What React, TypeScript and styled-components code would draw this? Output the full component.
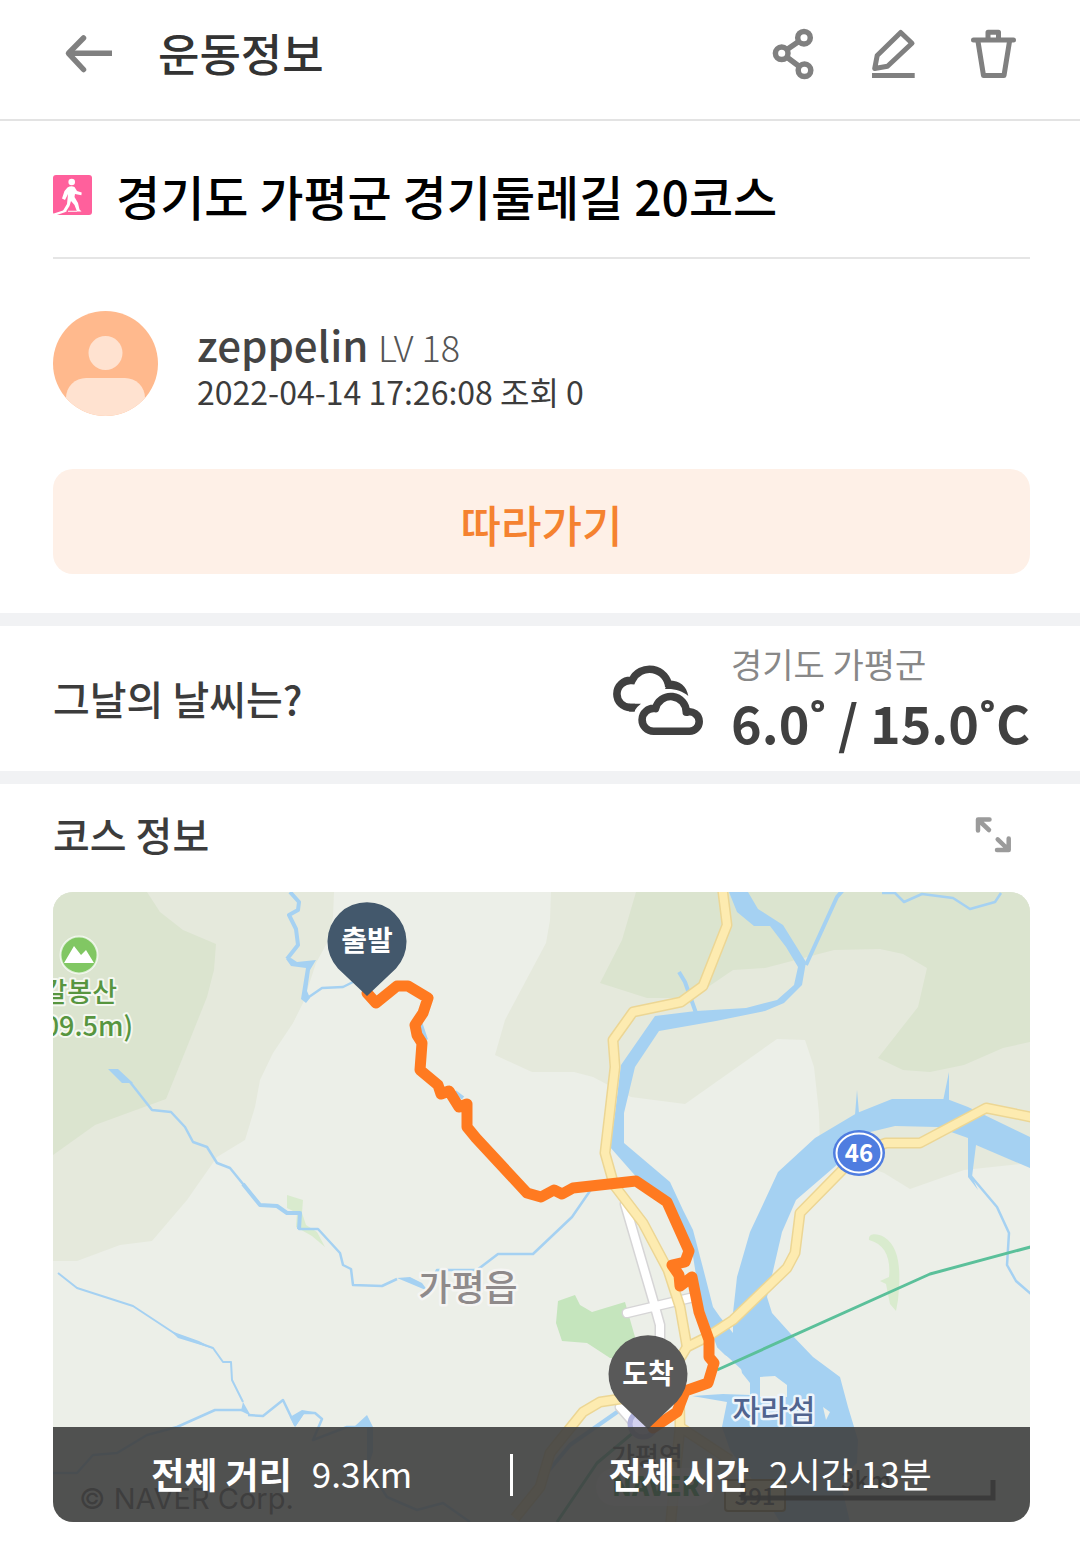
import React from "react";
import styled, { createGlobalStyle } from "styled-components";

const sans = `"Noto Sans CJK KR", "Noto Sans", sans-serif`;

const GlobalStyle = createGlobalStyle`
  *, *::before, *::after { box-sizing: border-box; }
  body { margin: 0; background: #fff; color: #3c3c3c; font-family: ${sans}; }
  h1, h2, p { margin: 0; }
  button { font: inherit; color: inherit; border: 0; padding: 0; background: none; cursor: pointer; }
`;

const Page = styled.main`
  width: 100%;
  padding-bottom: 27px;
`;

const TopBar = styled.header`
  display: flex;
  align-items: center;
  height: 121px;
  padding: 0 59px 14px 61px;
  border-bottom: 2px solid #e3e3e3;
`;

const BarTitle = styled.h1`
  flex: 1;
  margin-left: 41px;
  font-size: 45px;
  line-height: 56px;
  font-weight: 500;
  color: #333;
`;

const Actions = styled.div`
  display: flex;
  gap: 44px;
`;

const IconButton = styled.button`
  display: flex;
  width: 56px;
  height: 56px;
  color: #808080;

  svg { width: 100%; height: 100%; }
`;

const Section = styled.section`
  padding: 0 50px 0 53px;
`;

const CourseTitle = styled.div`
  display: flex;
  align-items: center;
  gap: 23px;
  height: 138px;
  padding-top: 12px;
  border-bottom: 2px solid #e5e5e5;

  svg { width: 40px; height: 40px; flex: none; }

  h2 {
    font-size: 48px;
    line-height: 64px;
    font-weight: 500;
    color: #000;
  }
`;

const Author = styled.div`
  display: flex;
  align-items: center;
  gap: 39px;
  padding: 52px 0 53px;

  > svg { width: 105px; height: 105px; flex: none; }
`;

const AuthorName = styled.p`
  font-size: 42px;
  line-height: 52px;
  font-weight: 500;
  color: #444;

  span {
    font-size: 36px;
    font-weight: 300;
    color: #555;
  }
`;

const AuthorMeta = styled.p`
  font-size: 32px;
  line-height: 38px;
  color: #3c3c3c;
`;

const FollowButton = styled.button`
  display: block;
  width: 100%;
  height: 105px;
  margin-bottom: 39px;
  padding-top: 4px;
  border-radius: 20px;
  background: #fef0e7;
  font-size: 44px;
  font-weight: 500;
  color: #f58230;
`;

const Band = styled.div`
  height: 13px;
  background: #f1f2f4;
`;

const WeatherRow = styled(Section)`
  display: flex;
  align-items: center;
  height: 145px;
  padding-bottom: 2px;
`;

const SectionTitle = styled.h2`
  flex: 1;
  font-size: 40px;
  line-height: 56px;
  font-weight: 500;
  color: #3c3c3c;
`;

const CloudIcon = styled.svg`
  flex: none;
  width: 90px;
  height: 72px;
  margin-right: 28px;
  overflow: visible;
`;

const Place = styled.p`
  font-size: 34px;
  line-height: 48px;
  font-weight: 400;
  color: #888;
`;

const Temperature = styled.p`
  font-size: 52px;
  line-height: 68px;
  font-weight: 700;
  color: #404040;
`;

const CourseHeader = styled(Section)`
  display: flex;
  align-items: center;
  height: 108px;
  padding-right: 59px;
  padding-bottom: 9px;
`;

const MapCard = styled.div`
  position: relative;
  overflow: hidden;
  border-radius: 20px;

  > svg { display: block; width: 100%; height: auto; }
`;

const Summary = styled.dl`
  position: absolute;
  left: 0;
  right: 0;
  bottom: 0;
  display: flex;
  align-items: center;
  height: 95px;
  margin: 0;
  padding-bottom: 4px;
  background: rgba(63, 63, 63, 0.9);
  color: #fff;
  font-size: 36px;
  line-height: 48px;
`;

const Stat = styled.div`
  flex: 1 1 auto;
  display: flex;
  justify-content: center;
  gap: 20px;

  & + & { position: relative; }
  & + &::before {
    content: "";
    position: absolute;
    left: 0;
    top: 5px;
    width: 3px;
    height: 42px;
    background: #fff;
  }

  dt { font-weight: 700; }
  dd { margin: 0; font-size: 35px; font-weight: 400; }
`;

const MapText = styled.text<{ $weight?: number }>`
  font-family: ${sans};
  font-weight: ${(p) => p.$weight ?? 500};
  paint-order: stroke;
  stroke-linejoin: round;
`;

const Copyright = styled.text`
  font-family: Inter, "Liberation Sans", sans-serif;
`;

const ROUTE =
  "M367 993L376 1003L397 986H408L428 998L423 1013L415 1025L417 1035L422 1043L420 1070L438 1085L441 1094L449 1091L459 1107L467 1104V1127L476 1138L527 1193L541 1197L554 1190L562 1194L573 1188L636 1181L667 1202L689 1251L685 1262L672 1265L679 1275L680 1286L692 1277L699 1312L709 1340V1357L714 1363L708 1383L685 1391L677 1412L653 1428";

const ROAD_A =
  "M722 885L727 925L703 986L681 1002L633 1012L613 1040L615 1067L605 1153L614 1185L643 1223L668 1270L680 1307L687 1347";
const ROAD_B =
  "M1036 1118L986 1108L920 1143H886L859 1153L800 1213L795 1253L787 1268L733 1320L707 1337L687 1347L670 1375L640 1396L600 1402L583 1412L550 1453L540 1487L515 1518M679 1380L680 1427L670 1530M680 1427L730 1460";
const WHITE_ROAD = "M625 1204L653 1300L660 1325V1345M627 1313L690 1298M620 1407L640 1430";

function Pin({ x, y, color, label }: { x: number; y: number; color: string; label: string }) {
  return (
    <g transform={`translate(${x} ${y})`}>
      <path d="M0 54L-29 26.500A39.500 39.500 0 1 1 29 26.500Z" fill={color} />
      <MapText $weight={700} y={9} textAnchor="middle" fontSize={28} fill="#fff">
        {label}
      </MapText>
    </g>
  );
}

function CourseMap() {
  return (
    <svg viewBox="53 892 977 630" role="img" aria-label="코스 지도">
      <rect x="53" y="892" width="977" height="630" fill="#ecefe8" />
      <g fill="#e5e9dc">
        <path d="M53 892H334L333 917L327 943L316 963L303 1003L293 1023L273 1053L260 1080L255 1107L245 1140L217 1157L187 1200L152 1241L120 1245L77 1261H53Z" />
        <path d="M551 892L550 920L546 943L505 1020L495 1055L532 1072H574L593 1077L631 1097L685 1104L777 1039L805 1040L814 1067L819 1113L820 1147L842 1157L884 1173L910 1189L964 1170L1030 1163V892Z" />
      </g>
      <g fill="#dbe4cf">
        <path d="M53 892H147L160 912L183 930L216 944L214 970L207 997L187 1047L166 1099L95 1125L53 1155Z" />
        <path d="M636 892L622 940L600 983L647 998H677L708 987L733 970L765 968L834 950L880 949L903 954L927 968L918 1007L878 1058L903 1070L930 1072L964 1065L1003 1048L1030 1042V892Z" />
      </g>
      <path fill="#c5e5bd" d="M558 1301L575 1295L580 1305L592 1312L625 1302L635 1337L630 1358H610L587 1343L562 1341L556 1323Z" />
      <g fill="#d9ebce">
        <path d="M287 1195L303 1200L302 1213L306 1225L317 1232L325 1247L312 1236L296 1227L297 1213L287 1208Z" />
        <path d="M869 1240C868 1233 877 1233 884 1237C900 1247 901 1270 898 1300L896 1311L890 1304L886 1284L880 1281L889 1277C891 1258 885 1244 869 1240Z" />
      </g>

      <g fill="#a5d1f2">
        <path d="M729 892L737 912L754 926H770L786 947L798 967L794 985L777 1000L746 1008L696 1011L655 1016L621 1065L615 1113L610 1147L639 1180L667 1198L692 1250L700 1300L717 1347L742 1370L760 1340L733 1333L720 1317L713 1307L703 1268L693 1230L683 1210L670 1182L624 1143V1113L635 1067L659 1031L716 1021L765 1011L784 1003L802 985L806 962L783 925L758 909L748 892Z" />
        <path d="M1030 1137L968 1107L947 1099H892L857 1113L815 1138L778 1172L765 1200L750 1232L737 1277L733 1313V1333L717 1347L725 1355L740 1363L742 1373L750 1383V1395L723 1394L692 1396L727 1402L722 1427L730 1450L760 1490L780 1522H850L840 1480L857 1463L858 1440L848 1407L840 1377L813 1357L790 1333L772 1313L767 1297L782 1232L796 1200L846 1157L862 1134L895 1126L937 1127L968 1138V1177L978 1190L972 1177L976 1145L1030 1168Z" />
        <path d="M855 1115L857 1090L859 1113ZM943 1101L949 1072V1101ZM108 1069L118 1069L133 1083L122 1083ZM286 959L291 958L297 962L316 960L310 970L307 991L310 998L306 1003L301 999L306 968L291 966Z" />
        <path d="M397 1278L410 1277L422 1283L428 1291L409 1283ZM171 1331L199 1341L214 1349L178 1338ZM290 1417L295 1427L304 1414L314 1412L302 1410ZM355 1426L367 1415L373 1427V1452L367 1470V1427ZM241 1411L243 1402L251 1416Z" />
      </g>
      <path fill="#ecefe8" d="M760 1377L775 1376L787 1385V1397H760ZM823 1407L830 1412L826 1420Z" />
      <g fill="none" stroke="#a5d1f2" strokeWidth="2.500" strokeLinejoin="round">
        <path strokeWidth="4" d="M290 892L299 902L298 910L289 915L296 929L298 945L287 959" />
        <path d="M306 999L322 988L343 987L355 981" />
        <path d="M130 1082L152 1110L171 1112L185 1127L193 1142L207 1147L217 1163L230 1168L260 1205L277 1206L287 1213H300L299 1229H318L340 1253L343 1265L351 1269L353 1285L382 1286L397 1279" />
        <path strokeWidth="4" d="M243 1184L260 1205L277 1206L287 1213H300L299 1229" />
        <path d="M428 1290L437 1270H477L498 1254H533L572 1217L592 1188" />
        <path d="M58 1273L77 1288L133 1306L177 1335L213 1348L223 1362H231L232 1380L243 1402" strokeWidth="2" />
        <path d="M242 1410H215L177 1427L147 1435L117 1453L93 1455L77 1473H53M248 1415L263 1416L283 1400L295 1425L303 1413H315L322 1419L313 1440L347 1427H372M368 1467L387 1497L417 1510L443 1503L470 1522" />
        <path strokeWidth="4" d="M843 890L837 897L806 965M679 972L685 982L696 1013" />
        <path d="M882 893H895L904 902L922 894L953 898L970 909L995 902L1001 893" />
        <path d="M970 1175L997 1207L1009 1233L1007 1265L1016 1281L1031 1294" />
        <path strokeWidth="4" d="M620 1410L570 1445L545 1475M420 1022L426 1040M455 1092L463 1098" />
      </g>

      <g fill="none" strokeLinejoin="round">
        <path d={WHITE_ROAD} stroke="#d6d5d6" strokeWidth="11" strokeLinecap="round" />
        <path d={WHITE_ROAD} stroke="#fff" strokeWidth="8" strokeLinecap="round" />
        <path d={ROAD_A} stroke="#ecd694" strokeWidth="11" />
        <path d={ROAD_B} stroke="#ecd694" strokeWidth="11" />
        <path d={ROAD_A} stroke="#fdebb0" strokeWidth="8" />
        <path d={ROAD_B} stroke="#fdebb0" strokeWidth="8" />
        <path d="M1034 1246L930 1274L717 1370M640 1427L597 1463L557 1522" stroke="#5bc09a" strokeWidth="3" />
      </g>

      <circle cx="643" cy="1424" r="13" fill="#d3d2ef" stroke="#b0b2dc" strokeWidth="5" />
      <path d={ROUTE} fill="none" stroke="#ff7a20" strokeWidth="11" strokeLinecap="round" strokeLinejoin="round" />

      <g>
        <circle cx="79" cy="955" r="18.500" fill="#81c763" stroke="#fff" strokeOpacity=".7" strokeWidth="2" />
        <path d="M64 963L74 946L81 955L86 950L94 963Z" fill="#fff" />
        <MapText x="117" y="1002" textAnchor="end" fontSize="27" fill="#57953f" stroke="#f5f8f1" strokeWidth="4">갈봉산</MapText>
        <MapText x="133" y="1036" textAnchor="end" fontSize="27" fill="#57953f" stroke="#f5f8f1" strokeWidth="4">(909.5m)</MapText>
      </g>
      <MapText x="468" y="1301" textAnchor="middle" fontSize="36" fill="#8f8a8b" stroke="#f5f5f3" strokeWidth="5">가평읍</MapText>
      <MapText x="774" y="1421" textAnchor="middle" fontSize="30" fill="#51648f" stroke="#eef5fb" strokeWidth="5">자라섬</MapText>
      <g>
        <ellipse cx="859" cy="1153" rx="26" ry="23" fill="#4f7de0" />
        <ellipse cx="859" cy="1153" rx="22.500" ry="19.500" fill="none" stroke="#fff" strokeWidth="2" />
        <MapText $weight={700} x="859" y="1162" textAnchor="middle" fontSize="24" fill="#fff">46</MapText>
      </g>

      <MapText x="647" y="1466" textAnchor="middle" fontSize="26" fill="#333">가평역</MapText>
      <rect x="596" y="1468" width="120" height="38" rx="19" fill="#fff" fillOpacity=".7" />
      <MapText $weight={900} x="656" y="1496" textAnchor="middle" fontSize="26" fill="#008c28">NAVER</MapText>
      <rect x="725" y="1480" width="60" height="31" rx="3" fill="#ffe9a3" stroke="#8d7630" strokeWidth="2" />
      <MapText x="755" y="1505" textAnchor="middle" fontSize="24" fill="#222">391</MapText>
      <path d="M743 1483V1498H993V1480" fill="none" stroke="#000" strokeOpacity=".9" strokeWidth="5" />
      <MapText x="866" y="1489" textAnchor="middle" fontSize="24" fill="#000">3km</MapText>
      <Copyright x="79" y="1509" fontSize="29" fill="#333">© NAVER Corp.</Copyright>

      <Pin x={367} y={942} color="#43586c" label="출발" />
      <Pin x={648} y={1375} color="#595959" label="도착" />
    </svg>
  );
}

export default function App() {
  return (
    <Page>
      <GlobalStyle />
      <TopBar>
        <IconButton type="button" aria-label="뒤로">
          <svg viewBox="61 24 56 56" fill="none" stroke="currentColor" strokeWidth="5.500" strokeLinejoin="round">
            <path d="M112 52.300H69" />
            <path d="M83.500 37L68.500 52.300L83.500 68.500" strokeLinecap="round" />
          </svg>
        </IconButton>
        <BarTitle>운동정보</BarTitle>
        <Actions>
          <IconButton type="button" aria-label="공유">
            <svg viewBox="765 24 56 56" fill="none" stroke="currentColor" strokeWidth="5.500">
              <circle cx="804" cy="36.700" r="6.300" />
              <circle cx="781.700" cy="52.300" r="6.300" />
              <circle cx="804.500" cy="69.300" r="6.300" />
              <path d="M787 48.500L798.700 40.500M787 56.200L799 65.200" />
            </svg>
          </IconButton>
          <IconButton type="button" aria-label="수정">
            <svg viewBox="865 24 56 56" fill="none" stroke="currentColor" strokeWidth="5" strokeLinejoin="round">
              <path d="M900.700 31.500L912 42.300L887.500 65.300L874.700 67.500L877.200 54.500Z" />
              <path d="M872 74.500H914.700" />
            </svg>
          </IconButton>
          <IconButton type="button" aria-label="삭제">
            <svg viewBox="965 24 56 56" fill="none" stroke="currentColor" strokeWidth="5" strokeLinejoin="round" strokeLinecap="round">
              <path d="M973.500 39H1013.500M988 38V31.200H998.500V38" />
              <path d="M978 40.500L983.500 74.500H1004L1009.500 40.500" />
            </svg>
          </IconButton>
        </Actions>
      </TopBar>

      <Section>
        <CourseTitle>
          <svg viewBox="0 0 40 40" aria-hidden="true">
            <rect width="39" height="40" rx="3" fill="#ff609c" />
            <circle cx="18.700" cy="7" r="3.300" fill="#fff" />
            <path
              fill="#fff"
              d="M14.500 12.500Q18 10.500 21.500 12L24 16L28.700 17.500L28.400 20.300L22 19L21.500 22L25 28L26.500 34.500L28.500 36.500H24L21.500 30L18 26L16.500 31L13 36.500H9.500L14 29L15 19L12 25L9 23.500L11.500 16Z"
            />
            <path fill="#fff" d="M0 38.700L10 35.500L14 36.500L4 40H0ZM15 35.700H24V36.700H15Z" />
          </svg>
          <h2>경기도 가평군 경기둘레길 20코스</h2>
        </CourseTitle>

        <Author>
          <svg viewBox="0 0 105 105" aria-hidden="true">
            <clipPath id="avatar"><circle cx="52.500" cy="52.500" r="52.500" /></clipPath>
            <g clipPath="url(#avatar)">
              <rect width="105" height="105" fill="#ffb98d" />
              <circle cx="52.500" cy="42" r="17" fill="#ffe2d0" />
              <rect x="13" y="67" width="79" height="60" rx="20" fill="#ffe2d0" />
            </g>
          </svg>
          <div>
            <AuthorName>zeppelin <span>LV 18</span></AuthorName>
            <AuthorMeta>2022-04-14 17:26:08 조회 0</AuthorMeta>
          </div>
        </Author>

        <FollowButton type="button">따라가기</FollowButton>
      </Section>

      <Band />
      <WeatherRow>
        <SectionTitle>그날의 날씨는?</SectionTitle>
        <CloudIcon viewBox="0 0 90 72" fill="none" stroke="#404040" strokeWidth="7.600" role="img" aria-label="흐림">
          <path d="M22 45.600H17.500A13.600 13.600 0 0 1 3.900 32A13.600 13.600 0 0 1 19 18.500A19.300 19.300 0 0 1 55.800 25" />
          <path fill="#404040" stroke="none" d="M56 18.500C67 18.500 73.500 24 75.300 34C69 28.500 62 26.500 52 27ZM16 41.800H28Q23.500 45 21 49.400H16Z" />
          <path d="M40.500 69.200A11.400 11.400 0 0 1 29.100 57.800A11.400 11.400 0 0 1 42.500 46.600A15.600 15.600 0 0 1 73.300 50.300A9.700 9.700 0 0 1 86.200 59.500A9.700 9.700 0 0 1 76.500 69.200Z" strokeLinejoin="round" />
        </CloudIcon>
        <div>
          <Place>경기도 가평군</Place>
          <Temperature>6.0˚ / 15.0˚C</Temperature>
        </div>
      </WeatherRow>
      <Band />

      <CourseHeader>
        <SectionTitle>코스 정보</SectionTitle>
        <IconButton type="button" aria-label="지도 확대">
          <svg viewBox="965 806 56 56" fill="none" stroke="#9b9b9b" strokeWidth="4.500" strokeLinecap="round" strokeLinejoin="round">
            <path d="M978 830.500V819.500H989.500M979 820.500L989 830" />
            <path d="M1008.700 838.500V850H997M1007.700 849L997.700 839.300" />
          </svg>
        </IconButton>
      </CourseHeader>

      <Section>
        <MapCard>
          <CourseMap />
          <Summary>
            <Stat><dt>전체 거리</dt><dd>9.3km</dd></Stat>
            <Stat><dt>전체 시간</dt><dd>2시간 13분</dd></Stat>
          </Summary>
        </MapCard>
      </Section>
    </Page>
  );
}
